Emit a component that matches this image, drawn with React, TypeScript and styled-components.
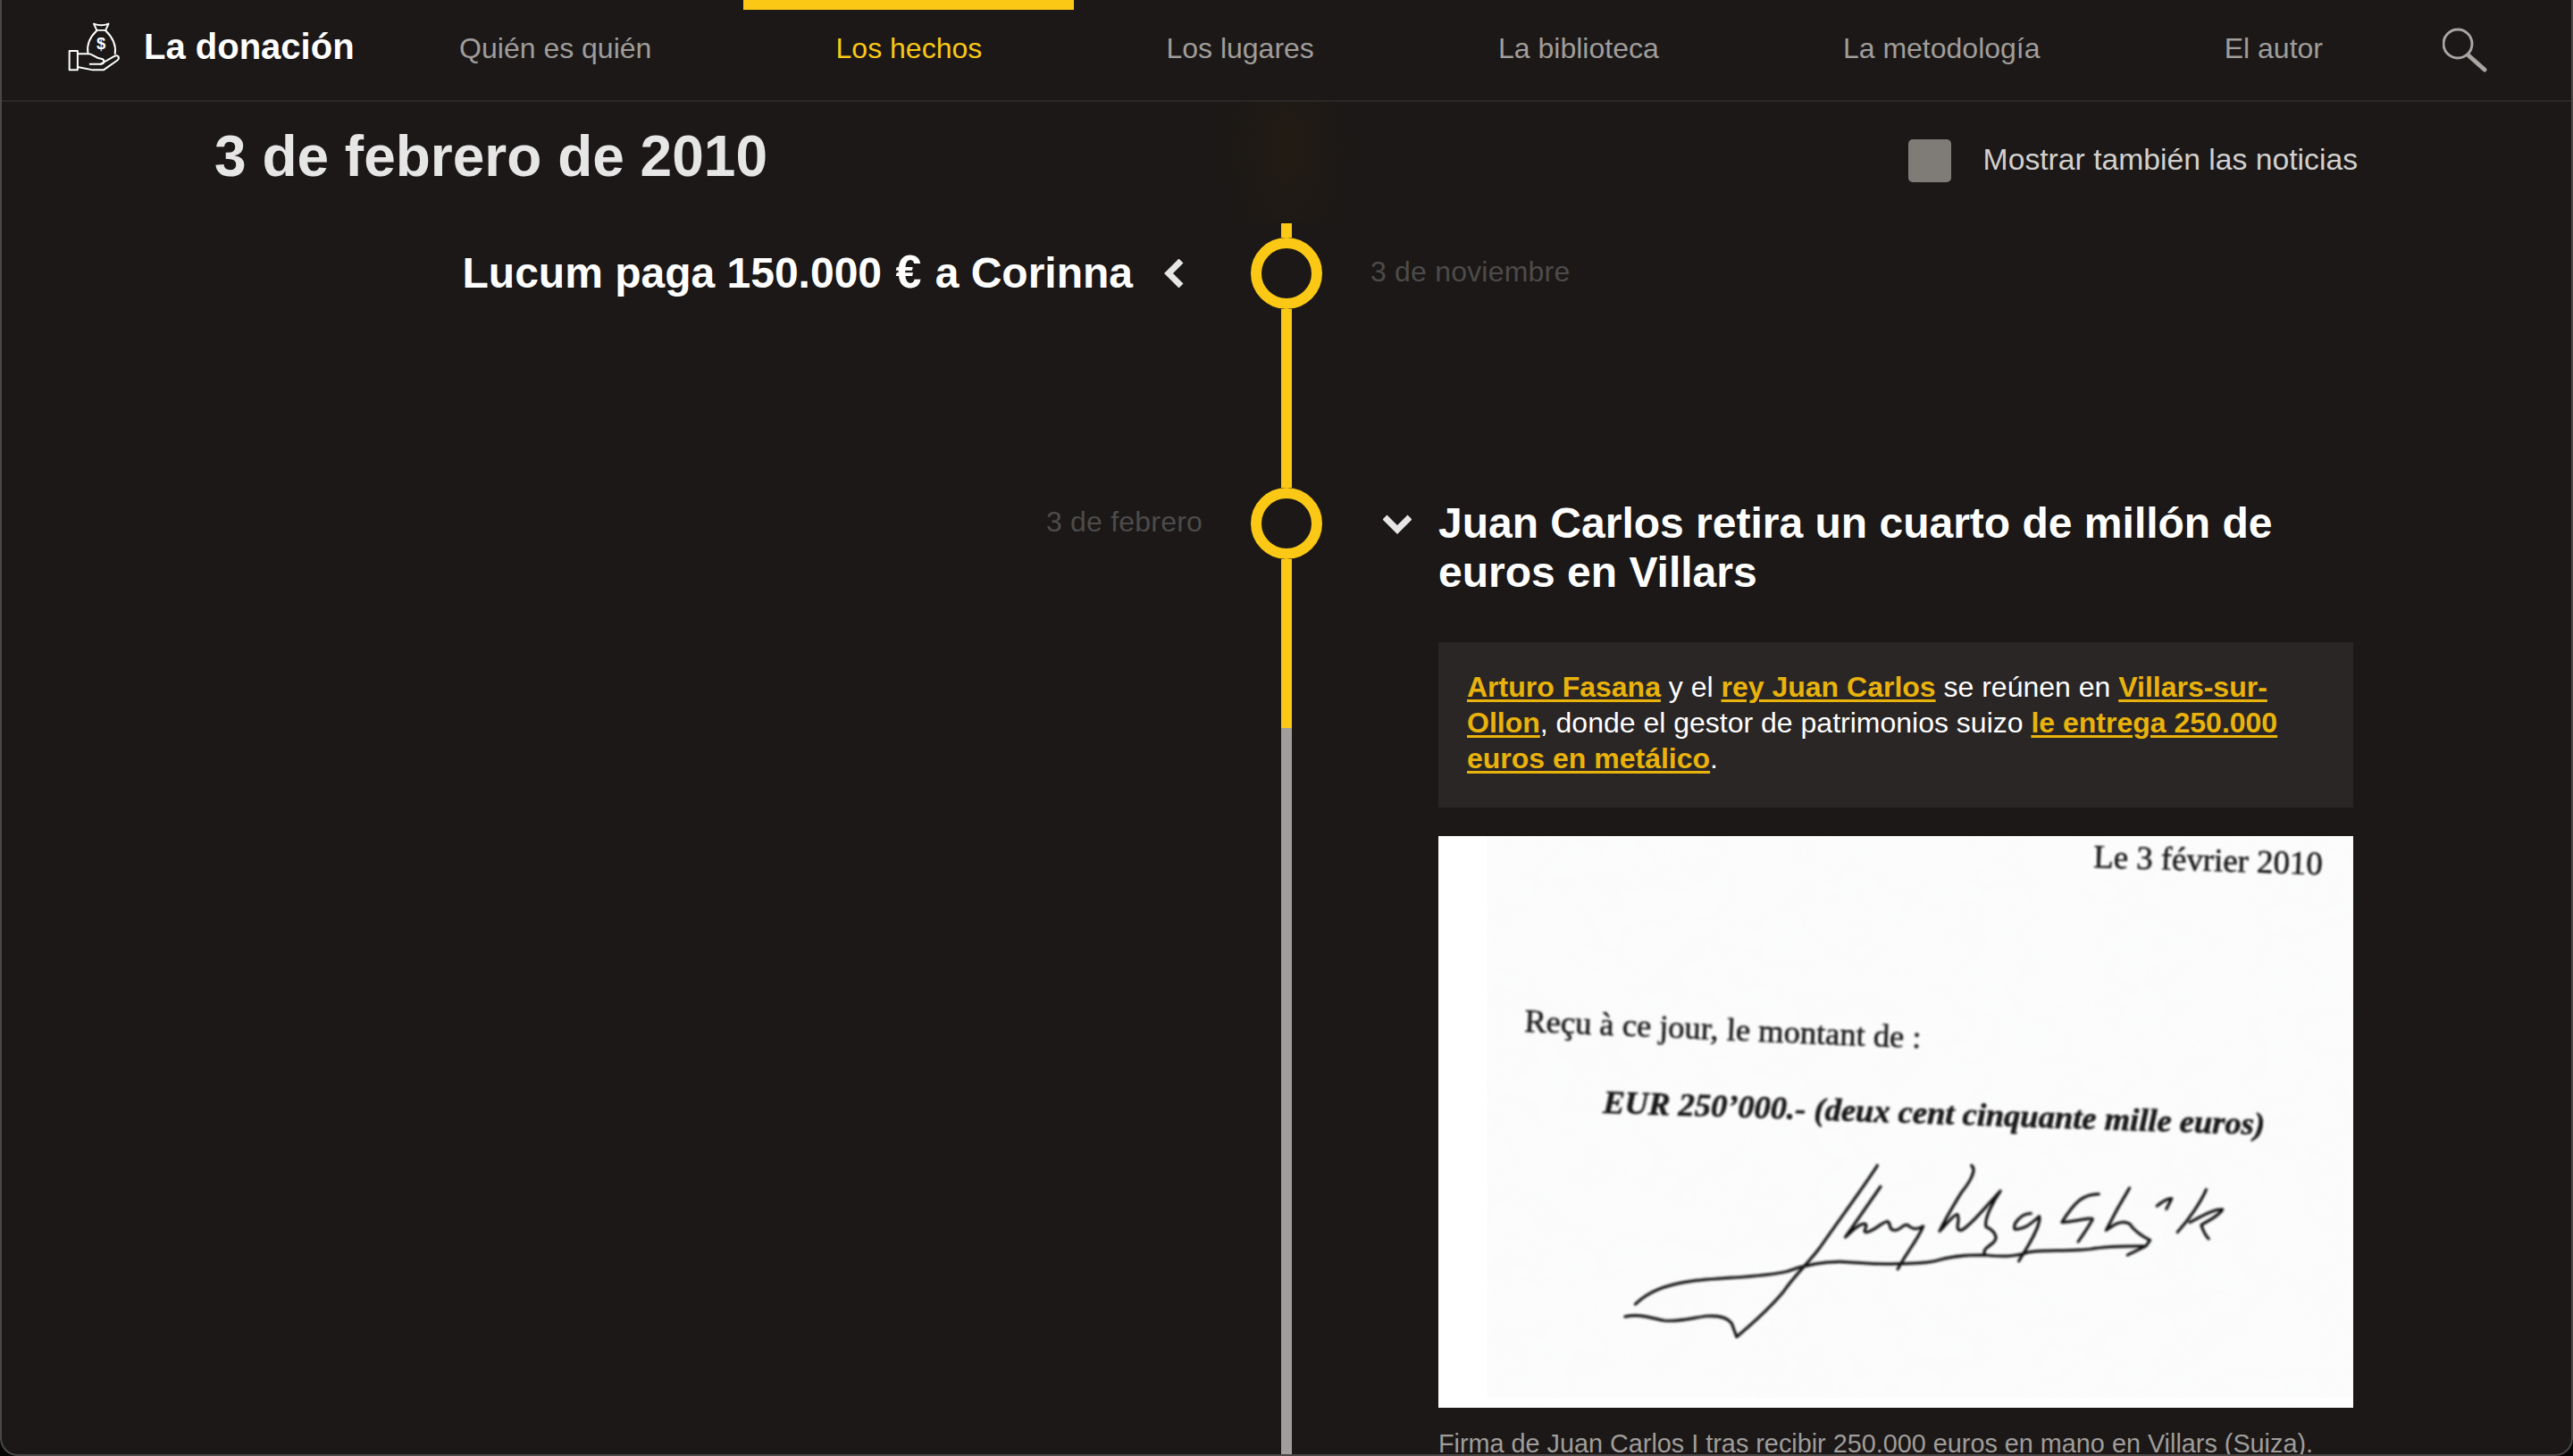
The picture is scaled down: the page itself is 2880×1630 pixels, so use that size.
import React from 'react';
import styled, { createGlobalStyle } from 'styled-components';

const YELLOW = '#fac815';

const GlobalStyle = createGlobalStyle`
  html, body {
    margin: 0;
    padding: 0;
    background: #050505;
  }
  body {
    font-family: "Liberation Sans", Arial, sans-serif;
  }
`;

const Frame = styled.div`
  box-sizing: border-box;
  height: 1630px;
  overflow: hidden;
  background: #1b1817;
  border-left: 2px solid #4a4847;
  border-right: 2px solid #4a4847;
  border-bottom: 2px solid #4a4847;
  border-radius: 0 0 20px 20px;
`;

const Nav = styled.nav`
  display: flex;
  align-items: stretch;
  height: 112px;
  border-bottom: 2px solid #2a2827;
  padding-left: 73px;
`;

const Brand = styled.div`
  display: flex;
  align-items: center;
  gap: 26px;
  width: 336px;
  padding-bottom: 8px;
  color: #fff;
  font-size: 40px;
  font-weight: bold;
`;

const NavItem = styled.a<{ $active?: boolean }>`
  display: flex;
  align-items: center;
  padding: 0 103.1px 15px;
  font-size: 32px;
  color: ${(p) => (p.$active ? YELLOW : '#a09d9a')};
  border-top: 11px solid ${(p) => (p.$active ? YELLOW : 'transparent')};
`;

const SearchButton = styled.div`
  display: flex;
  align-items: center;
  margin-left: 31px;
`;

const SubHeader = styled.div`
  box-sizing: border-box;
  display: flex;
  justify-content: space-between;
  height: 136px;
  padding: 26px 239px 0 238px;
  background: radial-gradient(ellipse 75px 150px at 1438px 50px, #221b13, transparent);
`;

const DayTitle = styled.h1`
  margin: 0;
  font-size: 64px;
  line-height: 70px;
  font-weight: bold;
  color: #e6e6e6;
`;

const Toggle = styled.label`
  display: flex;
  align-items: center;
  gap: 36px;
  height: 70px;
  padding-top: 3px;
  font-size: 33.7px;
  color: #d2d0ce;
`;

const ToggleBox = styled.span`
  width: 48px;
  height: 48px;
  margin-top: 3px;
  border-radius: 5px;
  background: #7f7c78;
`;

const Row = styled.section<{ $height?: number }>`
  display: grid;
  grid-template-columns: 1fr 80px 1fr;
  ${(p) => (p.$height ? `height: ${p.$height}px;` : 'min-height: 1100px;')}
`;

const RailColumn = styled.div`
  display: flex;
  flex-direction: column;
  align-items: center;
`;

const RailStub = styled.div`
  width: 12px;
  height: 16px;
  background: ${YELLOW};
`;

const Marker = styled.div`
  box-sizing: border-box;
  flex: none;
  width: 80px;
  height: 80px;
  border: 12px solid ${YELLOW};
  border-radius: 50%;
`;

const RailLine = styled.div<{ $progress?: number }>`
  flex: 1;
  width: 12px;
  background: ${(p) =>
    p.$progress ? `linear-gradient(${YELLOW} ${p.$progress}px, #a09e9c ${p.$progress}px)` : YELLOW};
`;

const LeftCell = styled.div<{ $inset: number; $top: number }>`
  display: flex;
  justify-content: flex-end;
  gap: 35px;
  padding-right: ${(p) => p.$inset}px;
  padding-top: ${(p) => p.$top}px;
`;

const DateLabel = styled.div<{ $inset?: number; $top?: number }>`
  padding-left: ${(p) => p.$inset ?? 0}px;
  padding-top: ${(p) => p.$top ?? 0}px;
  font-size: 32px;
  line-height: 40px;
  letter-spacing: 0.2px;
  color: #4d4b4a;
`;

const EventTitle = styled.h2`
  margin: 0;
  font-size: 48px;
  line-height: 55px;
  font-weight: bold;
  color: #fff;
`;

const EuroSign = styled.span`
  font-size: 52px;
  line-height: 1;
  margin: 0 2px;
`;

const RightCell = styled.div`
  display: flex;
  align-items: flex-start;
  gap: 30px;
  padding-left: 68px;
`;

const ChevronSlot = styled.div<{ $top: number }>`
  flex: none;
  display: flex;
  padding-top: ${(p) => p.$top}px;
`;

const EventBody = styled.div`
  width: 1024px;
  padding-top: 12px;
`;

const Summary = styled.p`
  margin: 51px 0 32px;
  padding: 30px 32px 35px;
  background: #2a2626;
  font-size: 32px;
  line-height: 40px;
  color: #fff;
`;

const Link = styled.a`
  font-weight: bold;
  color: #e9b30c;
  text-decoration: underline;
  text-decoration-thickness: 3px;
  text-underline-offset: 3px;
`;

const ScanSvg = styled.svg`
  display: block;
  width: 1024px;
  height: 640px;
`;

const Caption = styled.div`
  margin-top: 22px;
  font-size: 28.8px;
  line-height: 36px;
  color: #a09d9a;
`;

const NAV_ITEMS = ['Quién es quién', 'Los hechos', 'Los lugares', 'La biblioteca', 'La metodología', 'El autor'];

const SIGNATURE_STROKES = [
  'M700 45 C660 130 600 240 560 320 C530 375 500 410 470 470 C440 520 400 570 357 620 L345 575 C335 555 310 548 285 550 C250 555 220 570 180 565 C150 558 120 540 85 552',
  'M110 510 C140 470 180 445 250 432 C320 420 420 420 480 400 C510 385 560 365 620 368 C660 370 690 378 750 374 C790 372 820 375 850 362 C890 345 930 345 960 345 C990 348 1030 355 1070 335 C1110 325 1160 335 1220 325 C1260 315 1310 315 1350 315',
  'M708 115 L622 285 C640 262 655 240 670 240 C680 245 660 270 675 268 C695 262 710 235 725 232 C735 240 725 262 745 262 C760 258 762 238 775 245 C785 258 795 262 812 248 C800 290 770 340 750 392',
  'M930 45 C945 60 920 110 905 135 C885 180 865 225 852 265 C870 240 885 210 895 208 C905 225 885 262 905 262 C930 245 965 180 1000 130 C985 160 960 220 965 250 C985 262 995 285 985 300 C975 315 955 325 962 342',
  'M1075 205 C1050 205 1030 240 1035 258 C1060 262 1080 232 1095 215 C1100 240 1075 300 1045 365',
  'M1240 140 C1200 140 1180 170 1150 235 C1175 235 1225 215 1225 225 C1215 250 1200 280 1190 300',
  'M1315 120 C1295 165 1275 215 1258 262 C1275 245 1295 225 1315 240 C1330 270 1350 285 1365 295 L1355 315 L1310 345',
  'M1382 180 C1395 165 1410 155 1418 155 L1405 190',
  'M1502 125 C1490 165 1460 225 1432 268 M1462 235 C1490 215 1520 190 1542 192 C1530 220 1490 240 1490 245 C1495 265 1500 280 1508 290',
];

const ChevronLeft = () => (
  <svg width="22" height="32" viewBox="0 0 22 32" fill="none" stroke="#e6e6e6" strokeWidth="7">
    <path d="M19 2 L5 16 L19 30" />
  </svg>
);

const ChevronDown = () => (
  <svg width="32" height="22" viewBox="0 0 32 22" fill="none" stroke="#e6e6e6" strokeWidth="7">
    <path d="M2 3 L16 17 L30 3" />
  </svg>
);

const DonationLogo = () => (
  <svg width="60" height="56" viewBox="45 40 180 170" fill="none" stroke="#fff" strokeWidth="6" strokeLinejoin="round" strokeLinecap="round">
    <rect x="52" y="140" width="28" height="65" />
    <path d="M80 150 H118 C132 150 140 165 160 167 C174 170 172 185 158 185 H122" />
    <path d="M158 185 L205 158 C220 152 224 166 214 173 L168 205 H132 L80 195" />
    <path d="M135 48 Q160 58 185 48 L175 70 H145 Z" />
    <path d="M145 71 C125 90 110 118 115 148" />
    <path d="M175 71 C195 90 212 118 207 150" />
    <text x="160" y="135" textAnchor="middle" fontFamily="Liberation Sans" fontSize="56" fill="#fff" stroke="none">$</text>
  </svg>
);

const SearchIcon = () => (
  <svg width="50" height="50" viewBox="0 0 50 50" fill="none" stroke="#a8a5a3" strokeLinecap="round">
    <circle cx="17" cy="18" r="16" strokeWidth="3" />
    <path d="M29 31 L47 47" strokeWidth="5" />
  </svg>
);

// the scanned receipt, with its typed lines slightly crooked like the paper
const ScanImage = () => (
  <ScanSvg viewBox="0 0 1024 640">
    <defs>
      <filter id="scan-blur">
        <feGaussianBlur stdDeviation="0.9" />
      </filter>
      <filter id="paper" x="-5%" y="-5%" width="110%" height="110%">
        <feTurbulence type="fractalNoise" baseFrequency="0.012 0.02" numOctaves="3" seed="4" />
        <feColorMatrix values="0 0 0 0 0.93  0 0 0 0 0.94  0 0 0 0 0.94  0 0 0 0.22 0" />
        <feComposite in2="SourceAlpha" operator="in" />
        <feGaussianBlur stdDeviation="3" />
      </filter>
    </defs>
    <rect width="1024" height="640" fill="#fff" />
    <rect x="54" width="970" height="629" fill="#fcfcfc" />
    <rect x="54" width="970" height="629" filter="url(#paper)" />
    <g fill="#151515" stroke="#151515" strokeWidth="0.5" fontFamily="Liberation Serif" filter="url(#scan-blur)">
      <text x="733" y="35" fontSize="36.8" transform="rotate(1.8 733 35)">Le 3 février 2010</text>
      <text x="96" y="219" fontSize="36.5" transform="rotate(2.4 96 219)">Reçu à ce jour, le montant de :</text>
      <text x="184" y="310" fontSize="36.5" fontWeight="bold" fontStyle="italic" transform="rotate(1.9 184 310)">
        EUR 250’000.- (deux cent cinquante mille euros)
      </text>
      <g transform="translate(170 354) scale(0.459 0.3333)" fill="none" stroke="#111" strokeLinecap="round" strokeLinejoin="round">
        {SIGNATURE_STROKES.map((d) => (
          <path key={d} d={d} strokeWidth="3.2" vectorEffect="non-scaling-stroke" />
        ))}
      </g>
    </g>
  </ScanSvg>
);

export default function App() {
  return (
    <Frame>
      <GlobalStyle />
      <Nav>
        <Brand>
          <DonationLogo />
          La donación
        </Brand>
        {NAV_ITEMS.map((item) => (
          <NavItem key={item} $active={item === 'Los hechos'}>{item}</NavItem>
        ))}
        <SearchButton>
          <SearchIcon />
        </SearchButton>
      </Nav>
      <SubHeader>
        <DayTitle>3 de febrero de 2010</DayTitle>
        <Toggle>
          <ToggleBox />
          Mostrar también las noticias
        </Toggle>
      </SubHeader>
      <Row $height={296}>
        <LeftCell $inset={75} $top={28}>
          <EventTitle>Lucum paga 150.000 <EuroSign>€</EuroSign> a Corinna</EventTitle>
          <ChevronSlot $top={12}>
            <ChevronLeft />
          </ChevronSlot>
        </LeftCell>
        <RailColumn>
          <RailStub />
          <Marker />
          <RailLine />
        </RailColumn>
        <DateLabel $inset={54} $top={34}>3 de noviembre</DateLabel>
      </Row>
      <Row>
        <LeftCell $inset={54} $top={18}>
          <DateLabel>3 de febrero</DateLabel>
        </LeftCell>
        <RailColumn>
          <Marker />
          <RailLine $progress={189} />
        </RailColumn>
        <RightCell>
          <ChevronSlot $top={30}>
            <ChevronDown />
          </ChevronSlot>
          <EventBody>
            <EventTitle>Juan Carlos retira un cuarto de millón de euros en Villars</EventTitle>
            <Summary>
              <Link>Arturo Fasana</Link> y el <Link>rey Juan Carlos</Link> se reúnen en <Link>Villars-sur-Ollon</Link>, donde el gestor de patrimonios suizo <Link>le entrega 250.000 euros en metálico</Link>.
            </Summary>
            <ScanImage />
            <Caption>Firma de Juan Carlos I tras recibir 250.000 euros en mano en Villars (Suiza).</Caption>
          </EventBody>
        </RightCell>
      </Row>
    </Frame>
  );
}
